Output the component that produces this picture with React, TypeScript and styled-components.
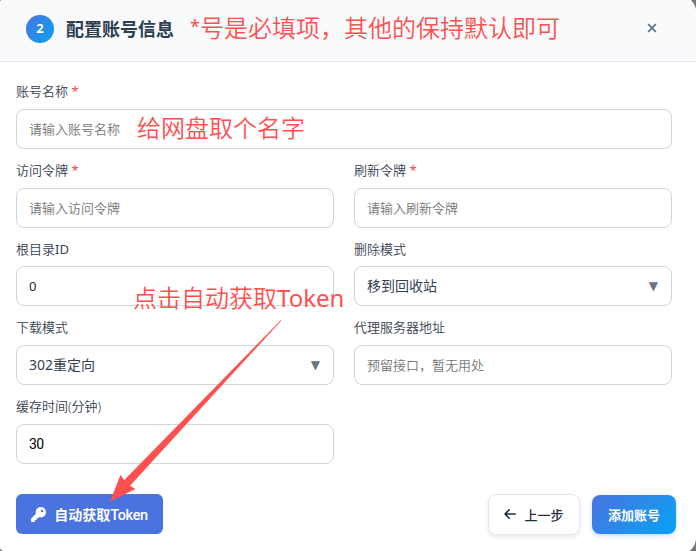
import React from "react";
import styled, { createGlobalStyle } from "styled-components";
import { FaKey } from "react-icons/fa6";

const GlobalStyle = createGlobalStyle`
  * { box-sizing: border-box; }
  html, body { margin: 0; height: 551px; overflow: hidden; background: #777; }
  body, input, button { font-family: "Noto Sans", "Noto Sans CJK SC", sans-serif; }
`;

const Viewport = styled.div`
  position: relative;
  width: 696px;
  height: 551px;
  overflow: hidden;
  background: #777;
`;

const Modal = styled.main`
  display: flex;
  flex-direction: column;
  width: 700px;
  height: 558px;
  margin: -4px 0 0 -4px;
  border-radius: 16px;
  overflow: hidden;
  background: #fff;
`;

const Header = styled.header`
  display: flex;
  align-items: center;
  flex: none;
  height: 66px;
  padding: 0 30px;
  background: #f8fafc;
  border-bottom: 1px solid #e2e6ed;
`;

const Step = styled.span`
  display: flex;
  align-items: center;
  justify-content: center;
  width: 28px;
  height: 28px;
  margin-right: 12px;
  border-radius: 50%;
  background: linear-gradient(135deg, #4b73e0, #06a3f3);
  color: #fff;
  font-size: 13px;
  line-height: 26px;
  padding-bottom: 1px;
  font-weight: 700;
`;

const Title = styled.h1`
  margin: 0;
  color: #2c3e50;
  font-size: 18px;
  line-height: 28px;
  font-weight: 700;
`;

const Close = styled.button`
  display: flex;
  margin: -2px 0 0 auto;
  padding: 4px;
  border: 0;
  background: none;
  color: #64748b;
`;

const Form = styled.form`
  display: grid;
  grid-template-columns: 318px 318px;
  gap: 12px 20px;
  padding: 20.33px 24px 0 20px;
`;

const Field = styled.div<{ $wide?: boolean }>`
  display: flex;
  flex-direction: column;
  gap: 8px;
  grid-column: ${(p) => (p.$wide ? "1 / -1" : "auto")};
`;

const Label = styled.label`
  height: 18.67px;
  line-height: 19.4px;
  font-size: 13px;
  font-weight: 350;
  color: #374151;
  white-space: nowrap;
`;

const Latin = styled.span`
  font-weight: 400;
`;

const Required = styled.span`
  color: #ef4444;
  font-weight: 400;
`;

const Input = styled.input<{ $ink?: string }>`
  width: 100%;
  height: 40px;
  padding: 0 12px;
  border: 1px solid #d1d5db;
  border-radius: 8px;
  background: #fff;
  color: ${(p) => p.$ink || "#1f2937"};
  font-size: 13px;
  outline: 0;
  &::placeholder { color: #757575; opacity: 1; font-weight: 350; }
`;

const NumberInput = styled(Input)`
  font-family: Roboto, sans-serif;
  font-size: 14px;
  letter-spacing: -0.5px;
`;

const Select = styled.div`
  display: flex;
  align-items: center;
  justify-content: space-between;
  height: 40px;
  padding: 0 13px 0 12px;
  border: 1px solid #d1d5db;
  border-radius: 8px;
  color: #374151;
  font-size: 14px;
  line-height: 20px;
`;

const Caret = styled.span`
  color: #6b7280;
  font-family: "DejaVu Sans", sans-serif;
  font-size: 12px;
`;

const Footer = styled.footer`
  display: flex;
  align-items: center;
  gap: 12px;
  margin-top: 30px;
  padding: 0 20px;
`;

const Button = styled.button`
  display: flex;
  align-items: center;
  justify-content: center;
  flex: none;
  height: 40px;
  padding: 0;
  border: 0;
  border-radius: 8px;
  color: #fff;
  font-size: 13px;
  font-weight: 700;
  white-space: nowrap;
`;

const TokenButton = styled(Button)`
  width: 147px;
  gap: 8px;
  margin-right: auto;
  border-radius: 6px;
  background: #4b73df;
  font-size: 14px;
`;

const TokenText = styled.span`
  font-weight: 700;
`;

const TokenWord = styled.span`
  font-family: Roboto, sans-serif;
  font-size: 14.5px;
  font-weight: 500;
  letter-spacing: -0.35px;
`;

const BackButton = styled(Button)`
  width: 92px;
  height: 41px;
  gap: 8px;
  border: 1px solid #e2e8f0;
  background: #fff;
  color: #1f2d3d;
  font-weight: 500;
  box-shadow: 0 2px 4px rgba(15, 23, 42, 0.1);
`;

const AddButton = styled(Button)`
  width: 84px;
  height: 39px;
  margin-top: 1px;
  background: linear-gradient(135deg, #4b73e0, #06a3f3);
  box-shadow: 0 2px 5px rgba(75, 115, 224, 0.28);
`;

const Note = styled.span<{ $x: number; $y: number }>`
  position: absolute;
  left: ${(p) => p.$x}px;
  top: ${(p) => p.$y}px;
  color: #ff5050;
  font-size: 24px;
  font-weight: 350;
  line-height: 32px;
  white-space: nowrap;
  pointer-events: none;
`;

const Star = styled.span`
  font-size: 18px;
  font-weight: 400;
  line-height: 0;
  vertical-align: 4px;
`;

const Arrow = styled.svg`
  position: absolute;
  left: 108px;
  top: 318px;
  pointer-events: none;
`;

type FieldProps = { label: React.ReactNode; required?: boolean; wide?: boolean; children: React.ReactNode };

const FormField = ({ label, required, wide, children }: FieldProps) => (
  <Field $wide={wide}>
    <Label>
      {label}
      {required && <Required> *</Required>}
    </Label>
    {children}
  </Field>
);

export default function App() {
  return (
    <>
      <GlobalStyle />
      <Viewport>
        <Modal>
          <Header>
            <Step>2</Step>
            <Title>配置账号信息</Title>
            <Close aria-label="关闭">
              <svg width="20" height="20" viewBox="0 0 20 20" fill="none" stroke="currentColor" strokeWidth="1.8">
                <path d="M6.200 6.200l7.600 7.600M13.800 6.200l-7.600 7.600" />
              </svg>
            </Close>
          </Header>
          <Form>
            <FormField label="账号名称" required wide>
              <Input placeholder="请输入账号名称" />
            </FormField>
            <FormField label="访问令牌" required>
              <Input placeholder="请输入访问令牌" />
            </FormField>
            <FormField label="刷新令牌" required>
              <Input placeholder="请输入刷新令牌" />
            </FormField>
            <FormField label={<>根目录<Latin>ID</Latin></>}>
              <Input defaultValue="0" />
            </FormField>
            <FormField label="删除模式">
              <Select>移到回收站<Caret>▼</Caret></Select>
            </FormField>
            <FormField label="下载模式">
              <Select>302重定向<Caret>▼</Caret></Select>
            </FormField>
            <FormField label="代理服务器地址">
              <Input placeholder="预留接口，暂无用处" />
            </FormField>
            <FormField label="缓存时间(分钟)">
              <NumberInput defaultValue="30" $ink="#000" />
            </FormField>
          </Form>
          <Footer>
            <TokenButton>
              <FaKey size={15} />
              <TokenText>自动获取<TokenWord>Token</TokenWord></TokenText>
            </TokenButton>
            <BackButton>
              <svg width="12" height="12" viewBox="0 0 12 12" fill="none" stroke="currentColor" strokeWidth="1.6" strokeLinecap="round" strokeLinejoin="round">
                <path d="M11.2 6H1M5.2 1.7L1 6l4.2 4.3" />
              </svg>
              上一步
            </BackButton>
            <AddButton>添加账号</AddButton>
          </Footer>
        </Modal>
        <Note $x={190} $y={12}><Star>*</Star>号是必填项，其他的保持默认即可</Note>
        <Note $x={137} $y={112}>给网盘取个名字</Note>
        <Note $x={133} $y={282}>点击自动获取<Latin>Token</Latin></Note>
        <Arrow width="176" height="186" viewBox="108 318 176 186">
          <path d="M281 320L281.500 320.500L130 485.700L135.500 489L110 501.500L120.500 475L124.300 480Z" fill="#ff5050" />
        </Arrow>
      </Viewport>
    </>
  );
}
